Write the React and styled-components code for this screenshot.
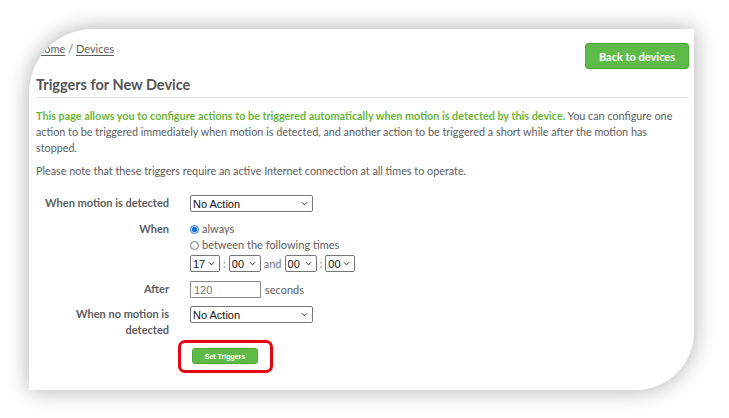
import React from 'react';
import styled, { createGlobalStyle } from 'styled-components';

const GlobalStyle = createGlobalStyle`
    html, body {
        margin: 0;
        padding: 0;
        background: #ffffff;
    }
    body {
        font-family: Lato, "Open Sans", sans-serif;
        color: #5d5d5d;
    }
`;

function Dropdown({ width, value }) {
    return (
        <SelectWrap $width={width}>
            <Select>
                <option>{value}</option>
            </Select>
            <Chevron viewBox="0 0 8 5" aria-hidden="true">
                <path d="M1 1 L4 4 L7 1" fill="none" stroke="#222" strokeWidth="1.1" />
            </Chevron>
        </SelectWrap>
    );
}

export default function App() {
    return (
        <>
            <GlobalStyle />
            <Page>
                <Card>
                    <Header>
                        <Breadcrumb>
                            <a href="#home">Home</a> / <a href="#devices">Devices</a>
                        </Breadcrumb>
                        <GreenButton>Back to devices</GreenButton>
                    </Header>
                    <Title>Triggers for New Device</Title>
                    <Intro>
                        <strong>This page allows you to configure actions to be triggered automatically when motion is detected by this device.</strong>{' '}
                        You can configure one action to be triggered immediately when motion is detected, and another action to be triggered a short while after the motion has stopped.
                    </Intro>
                    <Note>Please note that these triggers require an active Internet connection at all times to operate.</Note>

                    <Form>
                        <Label>When motion is detected</Label>
                        <Field>
                            <Dropdown width={123} value="No Action" />
                        </Field>

                        <Label $top={9}>When</Label>
                        <Field $top={9}>
                            <RadioLine>
                                <input type="radio" name="when" defaultChecked /> always
                            </RadioLine>
                            <RadioLine>
                                <input type="radio" name="when" /> between the following times
                            </RadioLine>
                            <TimeRow>
                                <Dropdown width={30} value="17" />
                                <Sep>:</Sep>
                                <Dropdown width={32} value="00" />
                                <Sep>and</Sep>
                                <Dropdown width={32} value="00" />
                                <Sep>:</Sep>
                                <Dropdown width={30} value="00" />
                            </TimeRow>
                        </Field>

                        <Label $top={9}>After</Label>
                        <Field $top={9}>
                            <Inline>
                                <NumberInput defaultValue="120" />
                                <span>seconds</span>
                            </Inline>
                        </Field>

                        <Label $top={8}>When no motion is<br />detected</Label>
                        <Field $top={8}>
                            <Dropdown width={123} value="No Action" />
                        </Field>

                        <span />
                        <Field $top={2}>
                            <Highlight>
                                <SmallButton>Set Triggers</SmallButton>
                            </Highlight>
                        </Field>
                    </Form>
                </Card>
            </Page>
        </>
    );
}

const Page = styled.div`
    padding: 29px 35px 28px 29px;
    height: 418px;
    box-sizing: border-box;
    overflow: hidden;
`;

const Card = styled.div`
    height: 361px;
    box-sizing: border-box;
    background: #fff;
    border-radius: 64px 0 58px 0;
    box-shadow: 0 0 22px rgba(0, 0, 0, 0.32);
    padding: 0 5px 0 7px;
    overflow: hidden;
`;

const Header = styled.div`
    display: flex;
    justify-content: space-between;
    align-items: flex-start;
    padding-top: 13px;
`;

const Breadcrumb = styled.div`
    font-size: 11px;
    line-height: 14px;
    color: #5d5d5d;

    a {
        color: #5d5d5d;
        text-decoration: underline;
        text-underline-offset: 2px;
    }
`;

const GreenButton = styled.button`
    margin-top: 1px;
    width: 104px;
    height: 26px;
    border: 1px solid #4fa83a;
    border-radius: 3px;
    background: #5fbb49;
    color: #fff;
    font-family: inherit;
    font-weight: 700;
    font-size: 11px;
    padding: 0;
`;

const Title = styled.h1`
    margin: 6px 0 0;
    padding-bottom: 2px;
    border-bottom: 1px solid #dedede;
    font-size: 14.5px;
    font-weight: 700;
    color: #555;
    line-height: 20px;
`;

const Intro = styled.p`
    margin: 10px 0 0;
    font-size: 10.8px;
    line-height: 16px;

    strong {
        color: #6ab63c;
        font-weight: 700;
    }
`;

const Note = styled.p`
    margin: 7px 0 0;
    font-size: 10.8px;
    line-height: 16px;
`;

const Form = styled.div`
    display: grid;
    grid-template-columns: 133px 1fr;
    column-gap: 21px;
    margin-top: 16px;
    font-size: 11px;
`;

const Label = styled.div`
    text-align: right;
    font-weight: 700;
    line-height: 16px;
    color: #5d5d5d;
    margin-top: ${(p) => p.$top || 0}px;
`;

const Field = styled.div`
    margin-top: ${(p) => p.$top || 0}px;
    display: flex;
    flex-direction: column;
    align-items: flex-start;
`;

const SelectWrap = styled.div`
    position: relative;
    width: ${(p) => p.$width}px;
    height: 17px;
`;

const Select = styled.select`
    appearance: none;
    -webkit-appearance: none;
    box-sizing: border-box;
    width: 100%;
    height: 100%;
    font-family: "Liberation Sans", Arial, sans-serif;
    font-size: 11px;
    color: #111;
    border: 1px solid #767676;
    border-radius: 2px;
    background: #fff;
    padding: 0 0 0 2px;
    margin: 0;
`;

const Chevron = styled.svg`
    position: absolute;
    right: 5px;
    top: 6px;
    width: 7px;
    height: 5px;
    pointer-events: none;
`;

const RadioLine = styled.label`
    display: flex;
    align-items: center;
    gap: 3px;
    line-height: 16px;
    color: #5d5d5d;

    input {
        margin: 1px 0 0;
        width: 9px;
        height: 9px;
        accent-color: #1b6fe0;
    }
`;

const TimeRow = styled.div`
    display: flex;
    align-items: center;
    gap: 2px;
    margin-top: 2px;
`;

const Sep = styled.span`
    color: #777;
    padding: 0 1px;
`;

const Inline = styled.div`
    display: flex;
    align-items: center;
    gap: 4px;
`;

const NumberInput = styled.input`
    width: 71px;
    height: 17px;
    box-sizing: border-box;
    border: 1px solid #888;
    border-radius: 1px;
    font-family: "Liberation Sans", Arial, sans-serif;
    font-size: 11px;
    color: #777;
    padding: 0 3px;
    margin: 0;
`;

const Highlight = styled.div`
    margin-left: -12px;
    padding: 5px 12px 6px 11px;
    border: 3px solid #e30613;
    border-radius: 7px;
`;

const SmallButton = styled.button`
    display: block;
    width: 66px;
    height: 16px;
    padding: 0;
    border: 1px solid #4fa83a;
    border-radius: 3px;
    background: #5fbb49;
    color: #fff;
    font-family: "Liberation Sans", Arial, sans-serif;
    font-weight: 700;
    font-size: 7px;
`;
